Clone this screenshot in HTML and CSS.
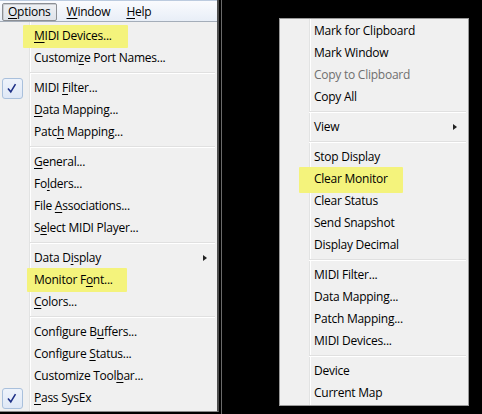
FILE: index.html
```html
<!DOCTYPE html>
<html>
<head>
<meta charset="utf-8">
<link rel="stylesheet" href="styles.css">
</head>
<body>
<div class="screen">
  <div class="app">
    <div class="menubar">
      <span class="mb-item open"><u>O</u>ptions</span>
      <span class="mb-item"><u>W</u>indow</span>
      <span class="mb-item"><u>H</u>elp</span>
    </div>
    <div class="dropdown menu">
      <div class="item"><span class="hl hl-devices"></span><span class="label"><u>M</u>IDI Devices...</span></div>
      <div class="item"><span class="label">Customi<u>z</u>e Port Names...</span></div>
      <div class="sep"></div>
      <div class="item"><span class="check"><svg viewBox="0 0 21 21" width="21" height="21"><path d="M5.5 10.5 L8.6 14.2 L13.8 5.6" fill="none" stroke="#1d2f86" stroke-width="1.7" stroke-linejoin="miter"/></svg></span><span class="label">MIDI <u>F</u>ilter...</span></div>
      <div class="item"><span class="label"><u>D</u>ata Mapping...</span></div>
      <div class="item"><span class="label">Patc<u>h</u> Mapping...</span></div>
      <div class="sep"></div>
      <div class="item"><span class="label"><u>G</u>eneral...</span></div>
      <div class="item"><span class="label">Fo<u>l</u>ders...</span></div>
      <div class="item"><span class="label">File <u>A</u>ssociations...</span></div>
      <div class="item"><span class="label">S<u>e</u>lect MIDI Player...</span></div>
      <div class="sep"></div>
      <div class="item"><span class="label">Data D<u>i</u>splay</span><span class="arrow"></span></div>
      <div class="item"><span class="hl hl-font"></span><span class="label">Monitor F<u>o</u>nt...</span></div>
      <div class="item"><span class="label"><u>C</u>olors...</span></div>
      <div class="sep"></div>
      <div class="item"><span class="label">Configure B<u>u</u>ffers...</span></div>
      <div class="item"><span class="label">Configure <u>S</u>tatus...</span></div>
      <div class="item"><span class="label">Customize Tool<u>b</u>ar...</span></div>
      <div class="item"><span class="check"><svg viewBox="0 0 21 21" width="21" height="21"><path d="M5.5 10.5 L8.6 14.2 L13.8 5.6" fill="none" stroke="#1d2f86" stroke-width="1.7" stroke-linejoin="miter"/></svg></span><span class="label"><u>P</u>ass SysEx</span></div>
    </div>
  </div>
  <div class="edge"></div>
  <div class="ctx-area">
    <div class="ctx menu">
      <div class="item"><span class="label">Mark for Clipboard</span></div>
      <div class="item"><span class="label">Mark Window</span></div>
      <div class="item disabled"><span class="label">Copy to Clipboard</span></div>
      <div class="item"><span class="label">Copy All</span></div>
      <div class="sep"></div>
      <div class="item"><span class="label">View</span><span class="arrow"></span></div>
      <div class="sep"></div>
      <div class="item"><span class="label">Stop Display</span></div>
      <div class="item"><span class="hl hl-clear"></span><span class="label">Clear Monitor</span></div>
      <div class="item"><span class="label">Clear Status</span></div>
      <div class="item"><span class="label">Send Snapshot</span></div>
      <div class="item"><span class="label">Display Decimal</span></div>
      <div class="sep"></div>
      <div class="item"><span class="label">MIDI Filter...</span></div>
      <div class="item"><span class="label">Data Mapping...</span></div>
      <div class="item"><span class="label">Patch Mapping...</span></div>
      <div class="item"><span class="label">MIDI Devices...</span></div>
      <div class="sep"></div>
      <div class="item"><span class="label">Device</span></div>
      <div class="item"><span class="label">Current Map</span></div>
    </div>
  </div>
</div>
</body>
</html>
```

FILE: styles.css
```css
html, body {
  margin: 0;
  padding: 0;
  background: #000;
}
body {
  width: 482px;
  height: 414px;
  overflow: hidden;
  font-family: "Open Sans", "Noto Sans", "DejaVu Sans", sans-serif;
  font-size: 12px;
  letter-spacing: -0.25px;
  color: #000;
}
.screen {
  display: flex;
  height: 414px;
}
.app {
  width: 217px;
  height: 411px;
  background: #f0f0f0;
  border-right: 2px solid #4d4d4d;
  border-bottom: 1px solid #8a8a8a;
  display: flex;
  flex-direction: column;
}
.menubar {
  box-sizing: border-box;
  height: 22px;
  border-top: 1px solid #bccbdf;
  border-bottom: 1px solid #a4adb9;
  background: linear-gradient(#fafbfe, #e8eef7);
  display: flex;
  align-items: flex-end;
  padding-left: 2px;
  gap: 4px;
}
.mb-item {
  box-sizing: border-box;
  height: 18px;
  line-height: 16px;
  padding: 0 5px;
  border: 1px solid transparent;
  border-radius: 2px;
}
.mb-item.open {
  border-color: #8c8f94;
  background: linear-gradient(#eef0f3, #dfe3ea);
  box-shadow: inset 1px 1px 0 #c9ccd2;
}
u {
  text-decoration-thickness: 1px;
  text-underline-offset: 2px;
}
.menu {
  background-image: linear-gradient(to right, transparent 29px, #e2e3e3 29px, #e2e3e3 30px, #ffffff 30px, #ffffff 31px, transparent 31px);
  background-color: #f0f0f0;
}
.dropdown {
  flex: 1;
  padding-top: 3px;
}
.item {
  position: relative;
  height: 22px;
  line-height: 22px;
  padding-left: 34px;
  white-space: nowrap;
}
.label {
  position: relative;
}
.item.disabled {
  color: #6f6f6f;
}
.sep {
  height: 8px;
  position: relative;
}
.sep::after {
  content: "";
  position: absolute;
  left: 30px;
  right: 2px;
  top: 3px;
  height: 1px;
  background: #e0e0e0;
  border-bottom: 1px solid #ffffff;
}
.check {
  position: absolute;
  left: 2px;
  top: 1px;
  width: 21px;
  height: 21px;
  box-sizing: border-box;
  border: 1px solid #a9c0dc;
  border-radius: 3px;
  background: linear-gradient(#eef3fb, #dfe8f6);
  display: flex;
  align-items: center;
  justify-content: center;
}
.check svg {
  display: block;
}
.arrow {
  position: absolute;
  right: 10px;
  top: 8px;
  width: 0;
  height: 0;
  border-left: 4px solid #222;
  border-top: 3.5px solid transparent;
  border-bottom: 3.5px solid transparent;
}
.hl {
  position: absolute;
  background: #f4f37c;
  border-radius: 1px;
}
.hl-devices {
  left: 23px;
  top: 0;
  width: 105px;
  height: 23px;
}
.hl-font {
  left: 27px;
  top: -1px;
  width: 100px;
  height: 24px;
}
.hl-clear {
  left: 19px;
  top: -1px;
  width: 104px;
  height: 26px;
}
.edge {
  width: 1px;
  height: 414px;
  margin-left: 2px;
  background: #6a6a6a;
}
.ctx-area {
  flex: 1;
  padding-top: 18px;
}
.ctx {
  box-sizing: border-box;
  margin-left: 57px;
  width: 190px;
  border: 1px solid #9a9a9a;
  padding: 1px 0;
}
.ctx .sep::after {
  left: 29px;
  right: 2px;
}
.ctx .arrow {
  right: 11px;
}
```
